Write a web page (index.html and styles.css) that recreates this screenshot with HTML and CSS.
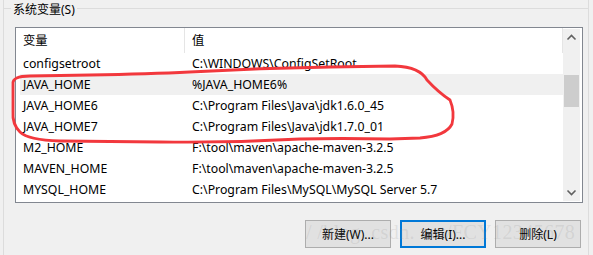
FILE: index.html
```html
<!DOCTYPE html>
<html lang="zh-CN">
<head>
    <meta charset="UTF-8">
    <title>系统变量</title>
    <link rel="stylesheet" href="styles.css">
</head>
<body>
    <div class="group">
        <div class="group-title">
            <span class="title-line short"></span>
            <span class="title-text">系统变量(S)</span>
            <span class="title-line"></span>
        </div>
        <div class="listview">
            <div class="list-body">
                <div class="list-header">
                    <div class="col col-name">变量</div>
                    <div class="col col-value">值</div>
                </div>
                <div class="row"><div class="col col-name">configsetroot</div><div class="col col-value">C:\WINDOWS\ConfigSetRoot</div></div>
                <div class="row selected"><div class="col col-name">JAVA_HOME</div><div class="col col-value">%JAVA_HOME6%</div></div>
                <div class="row"><div class="col col-name">JAVA_HOME6</div><div class="col col-value">C:\Program Files\Java\jdk1.6.0_45</div></div>
                <div class="row"><div class="col col-name">JAVA_HOME7</div><div class="col col-value">C:\Program Files\Java\jdk1.7.0_01</div></div>
                <div class="row"><div class="col col-name">M2_HOME</div><div class="col col-value">F:\tool\maven\apache-maven-3.2.5</div></div>
                <div class="row"><div class="col col-name">MAVEN_HOME</div><div class="col col-value">F:\tool\maven\apache-maven-3.2.5</div></div>
                <div class="row"><div class="col col-name">MYSQL_HOME</div><div class="col col-value">C:\Program Files\MySQL\MySQL Server 5.7</div></div>
            </div>
            <div class="scrollbar">
                <svg class="arrow" width="17" height="17" viewBox="0 0 17 17"><path d="M4.5 10.5 L8.5 6.5 L12.5 10.5" fill="none" stroke="#606060" stroke-width="1.6"/></svg>
                <div class="track"><div class="thumb"></div></div>
                <svg class="arrow" width="17" height="17" viewBox="0 0 17 17"><path d="M4.5 6.5 L8.5 10.5 L12.5 6.5" fill="none" stroke="#606060" stroke-width="1.6"/></svg>
            </div>
        </div>
        <div class="buttons">
            <button class="btn">新建(W)...</button>
            <button class="btn focused">编辑(I)...</button>
            <button class="btn">删除(L)</button>
        </div>
    </div>

    <div class="watermark">/ /blog. csdn. net/FCY12345678</div>

    <svg class="marker" width="593" height="255" viewBox="0 0 593 255">
        <path d="M13 84 Q12 76 30 76 L90 75 Q150 74 190 72 Q260 68 330 67 L395 66 Q420 67 427 80 Q438 92 450 100 Q455 112 452 124 Q446 136 420 138 L390 139 Q340 138 300 139 Q230 143 160 142 L60 141 Q28 140 20 132 Q12 124 13 112 Z" fill="none" stroke="#f2383d" stroke-width="2.8" stroke-linejoin="round"/>
    </svg>
</body>
</html>
```

FILE: styles.css
```css
body { margin: 0; width: 593px; height: 255px; overflow: hidden; background-color: #f0f0f0; color: #000; font-family: 'Noto Sans', 'Noto Sans CJK SC', sans-serif; font-size: 12px; position: relative; }

.group { margin: 0 4px 0 3px; height: 255px; border-left: 1px solid #dcdcdc; border-right: 1px solid #dcdcdc; box-sizing: border-box; }
.group-title { display: flex; align-items: center; height: 17px; margin-left: -1px; margin-right: -1px; }
.title-line { flex: 1; border-top: 1px solid #dcdcdc; }
.title-line.short { flex: none; width: 8px; }
.title-text { padding: 0 2px; line-height: 17px; white-space: nowrap; position: relative; top: 1px; }

.listview { display: flex; margin: 10px 5px 0 11px; height: 176px; border: 1px solid #828790; background-color: #fff; box-sizing: border-box; }
.list-body { flex: 1; font-size: 12.3px; }
.list-header { display: flex; height: 25px; align-items: stretch; }
.list-header .col { border-right: 1px solid #e5e5e5; line-height: 26px; }
.row { display: flex; height: 21px; line-height: 21px; }
.row.selected { background-color: #f0f0f0; margin-left: 4px; }
.row.selected .col-name { width: 165px; padding-left: 3px; }
.col { white-space: nowrap; overflow: hidden; box-sizing: border-box; }
.col-name { width: 169px; padding-left: 7px; }
.col-value { flex: 1; padding-left: 7px; }

.scrollbar { width: 17px; margin: 1px 2px 1px 0; display: flex; flex-direction: column; background-color: #f0f0f0; }
.arrow { display: block; flex: none; }
.track { flex: 1; padding: 29px 1px 0 1px; }
.thumb { height: 32px; background-color: #cdcdcd; }

.buttons { display: flex; justify-content: flex-end; gap: 9px; margin: 17px 7px 0 0; }
.btn { width: 86px; height: 28px; padding: 0; background-color: #e1e1e1; border: 1px solid #adadad; font-family: 'Noto Sans', 'Noto Sans CJK SC', sans-serif; font-size: 12px; color: #000; }
.btn.focused { border: 2px solid #0078d7; }

.watermark { position: absolute; left: 306px; top: 221px; font-family: 'Liberation Serif', serif; font-size: 20px; letter-spacing: 0.4px; color: rgba(140, 140, 140, 0.18); white-space: nowrap; pointer-events: none; }
.marker { position: absolute; left: 0; top: 0; pointer-events: none; }
```
